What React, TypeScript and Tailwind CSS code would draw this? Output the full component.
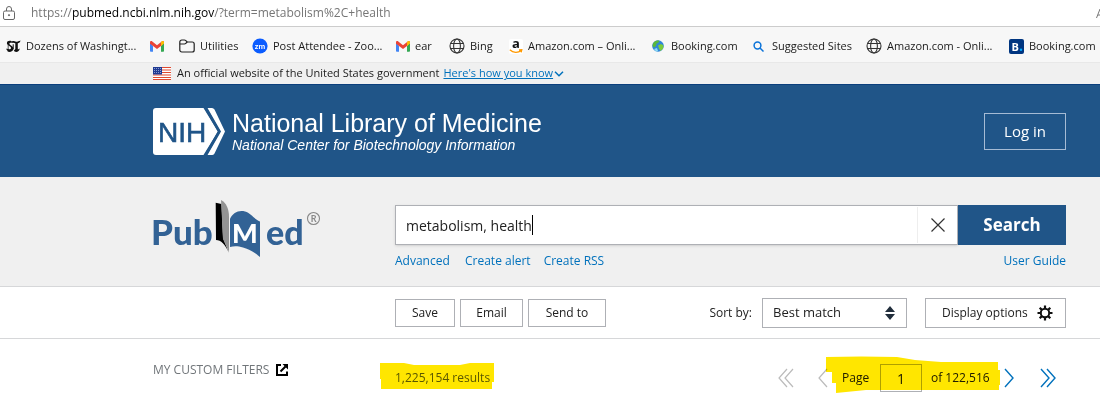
import React from 'react';

const GmailIcon = () => (
  <svg viewBox="0 0 14 11" className="h-[11px] w-[14px] shrink-0" aria-hidden="true">
    <path d="M0 1.6V10a.8.8 0 0 0 .8.8H3V5z" fill="#4285f4" />
    <path d="M14 1.6V10a.8.8 0 0 1-.8.8H11V5z" fill="#34a853" />
    <path d="M0 1.4C0 .2 1.3-.3 2.3.5L7 4.2 11.7.5C12.7-.3 14 .2 14 1.4L11 4.9 7 8 3 5 0 2.8z" fill="#ea4335" />
    <path d="M11 1 11.7.5C12.7-.3 14 .2 14 1.4v1.2l-3 2.4z" fill="#fbbc04" />
  </svg>
);

const GlobeIcon = () => (
  <svg viewBox="0 0 16 16" className="size-4 shrink-0" fill="none" stroke="#333" strokeWidth="1.1" aria-hidden="true">
    <circle cx="8" cy="8" r="7" />
    <ellipse cx="8" cy="8" rx="3.4" ry="7" />
    <path d="M1.5 5.5h13M1.5 10.5h13" />
  </svg>
);

const FolderIcon = () => (
  <svg viewBox="0 0 16 14" className="h-[14px] w-4 shrink-0" fill="none" stroke="#222" strokeWidth="1.2" aria-hidden="true">
    <path d="M.8 3A2 2 0 0 1 2.8 1h2.6c.6 0 1 .2 1.4.6L8.2 3h5a2 2 0 0 1 2 2v6a2 2 0 0 1-2 2H2.8a2 2 0 0 1-2-2z" />
    <path d="M.8 5h4.6c.6 0 1-.2 1.4-.6L8.2 3" />
  </svg>
);

const TimesIcon = () => (
  <svg viewBox="0 0 15 13" className="h-[13px] w-[15px] shrink-0" aria-hidden="true">
    <path d="M5.8 1.2C3.4.2.8 1 .9 3.3 1 5.4 5 6 5 8c0 1.3-2 1.7-4.5.5v1.3L3 12c2.6 0 4.4-1.3 4.4-3.5C7.4 6 3.4 5.3 3.4 3.5c0-1 1.2-1 2.4-.5z" fill="#111" />
    <path d="M6 1.5c1.5-1 2.6.3 4.2.3 1.4 0 2.6-.8 4.3-1.3-.4 1.8-1.3 2.7-2.7 2.7v6.3l2-1c-.4 2-1.7 3.5-3.7 3.5-1 0-1.6-.5-2.3-1.2L9.3 9V3.2C8.2 3 7.3 2.5 6 3zM6.7 4.2h1v5h-1z" fill="#111" />
    <path d="M2.2 1v11" stroke="#111" strokeWidth=".7" />
  </svg>
);

const ZoomIcon = () => (
  <svg viewBox="0 0 16 16" className="size-4 shrink-0" aria-hidden="true">
    <circle cx="8" cy="8" r="7.6" fill="#0b5cff" />
    <text x="8" y="10.5" textAnchor="middle" fontSize="8" fontWeight="700" fill="#fff" fontFamily="Lato, sans-serif">zm</text>
  </svg>
);

const AmazonIcon = () => (
  <svg viewBox="0 0 14 15" className="h-[15px] w-[14px] shrink-0 overflow-visible" aria-hidden="true">
    <rect width="14" height="15" rx="2" fill="#fff" />
    <text x="7" y="9" textAnchor="middle" fontSize="13" fontWeight="700" fill="#111" fontFamily="Open Sans, sans-serif">a</text>
    <path d="M.8 10.8c3.5 3.2 8.3 3.2 11.4.6M10 11l2.8-.3-.6 2.6" fill="none" stroke="#f90" strokeWidth="1.3" />
  </svg>
);

const EarthIcon = () => (
  <svg viewBox="0 0 12 12" className="mr-[2px] size-3 shrink-0" aria-hidden="true">
    <circle cx="6" cy="6" r="5.8" fill="#2f86d8" />
    <path d="M1 3.5C2.5 1 5 0 7.5 1L6 3 4.5 3.5 4 6 2 7.5.5 6z" fill="#59b83c" />
    <path d="M6 5.5 9 4l2.5 1.5L11 8.5 8.5 11 7 8.5z" fill="#7ccc3a" />
    <path d="M2 9l3-1 1 3-2 .5z" fill="#8edcf5" />
  </svg>
);

const SearchIcon = () => (
  <svg viewBox="0 0 11 11" className="mr-[3px] size-[11px] shrink-0" fill="none" stroke="#0b73d9" strokeWidth="1.5" aria-hidden="true">
    <circle cx="4.5" cy="4.5" r="3.4" />
    <path d="m7 7 3.5 3.5" />
  </svg>
);

const BookingIcon = () => (
  <svg viewBox="0 0 15 15" className="size-[15px] shrink-0" aria-hidden="true">
    <rect width="15" height="15" rx="2" fill="#003580" />
    <text x="2.5" y="11.5" fontSize="11" fontWeight="700" fill="#fff" fontFamily="Open Sans, sans-serif">B</text>
    <circle cx="12" cy="10.7" r="1.2" fill="#0af" />
  </svg>
);

const bookmarks = [
  { icon: <TimesIcon />, label: 'Dozens of Washingt...' },
  { icon: <GmailIcon />, label: '' },
  { icon: <FolderIcon />, label: 'Utilities' },
  { icon: <ZoomIcon />, label: 'Post Attendee - Zoo...' },
  { icon: <GmailIcon />, label: 'ear' },
  { icon: <GlobeIcon />, label: 'Bing' },
  { icon: <AmazonIcon />, label: 'Amazon.com – Onli...' },
  { icon: <EarthIcon />, label: 'Booking.com' },
  { icon: <SearchIcon />, label: 'Suggested Sites' },
  { icon: <GlobeIcon />, label: 'Amazon.com - Onli...' },
  { icon: <BookingIcon />, label: 'Booking.com' },
];

const BrowserBar: React.FC = () => (
  <div>
    <div className="flex h-[27px] items-center justify-between border-b border-[#ccc] bg-white pl-[3px] text-[12px] text-[#767676]">
      <div className="flex items-center gap-4">
        <svg viewBox="0 0 12 14" className="h-[14px] w-3" fill="none" stroke="#666" aria-hidden="true">
          <rect x=".5" y="5" width="11" height="8.5" rx="1.5" />
          <path d="M3.5 5V3a2.5 2.5 0 0 1 5 0v2" />
          <circle cx="6" cy="9.2" r=".6" fill="#666" />
        </svg>
        <span>https://<span className="text-black">pubmed.ncbi.nlm.nih.gov</span>/?term=metabolism%2C+health</span>
      </div>
      <svg viewBox="0 0 4 10" className="h-[10px] w-1" stroke="#777" fill="none" aria-hidden="true">
        <path d="M.5 10 4 1M2 7h2" />
      </svg>
    </div>
    <nav className="grid h-9 grid-cols-[144px_29px_73px_144px_53px_60px_143px_101px_113px_143px_auto] items-center border-b border-[#e8e8e8] bg-[#f7f7f7] pt-[3px] pl-[6px] text-[11px]">
      {bookmarks.map(({ icon, label }, i) => (
        <a key={i} href="#" aria-label={label || 'Gmail'} className="flex items-center gap-[5px] whitespace-nowrap text-[#1a1a1a]">
          {icon}
          {label}
        </a>
      ))}
    </nav>
  </div>
);

const FlagIcon = () => (
  <svg viewBox="0 0 18 13" className="h-[13px] w-[18px]" aria-hidden="true">
    <rect width="18" height="13" fill="#fff" />
    <path d="M0 .5h18M0 3h18M0 5.5h18M0 8h18M0 10.5h18M0 12.7h18" stroke="#e0492f" strokeWidth="1.2" />
    <rect width="9" height="7.5" fill="#1f3a93" />
    <path d="M1 1.5h7M1 3.5h7M1 5.5h7" stroke="#b9c4e8" strokeWidth=".7" strokeDasharray="1 1" />
  </svg>
);

const GovBanner: React.FC = () => (
  <div className="flex h-[21px] items-center bg-[#f0f0f0] pl-[153px] text-[11px] text-[#1b1b1b]">
    <FlagIcon />
    <span className="ml-[6px]">An official website of the United States government</span>
    <a href="#" className="ml-1 flex items-center text-[#0071bc] underline">
      Here's how you know
      <svg viewBox="0 0 10 6" className="ml-px h-[6px] w-[10px]" fill="none" stroke="#0071bc" strokeWidth="1.5" aria-hidden="true">
        <path d="m1 .8 4 4 4-4" />
      </svg>
    </a>
  </div>
);

const Header: React.FC = () => (
  <header className="flex h-[93px] items-center justify-between border-t border-[#0b3f7c] bg-[#205588] pr-[34px] pl-[153px] text-white">
    <a href="#" className="flex items-center gap-[7px]">
      <svg viewBox="0 0 72 47" className="h-[47px] w-[72px]" aria-hidden="true">
        <path d="M3 0h47.5L65 23.5 50.5 47H3a3 3 0 0 1-3-3V3a3 3 0 0 1 3-3z" fill="#fff" />
        <path d="M54.5 0H59q1.5 0 2.5 1.5L72 23.5 61.5 45.5Q60.5 47 59 47h-4.500L68 23.5z" fill="#fff" />
        <path d="M52 -1 66 23.5 52 48" fill="none" stroke="#205588" strokeWidth="2.4" />
        <text x="5" y="33.5" fontSize="28" fill="#205588" stroke="#205588" strokeWidth=".6" fontFamily="Liberation Sans, sans-serif">NIH</text>
      </svg>
      <span className="flex flex-col pt-px font-['Liberation_Sans',sans-serif]">
        <span className="text-[25px] leading-[26px]">National Library of Medicine</span>
        <span className="text-[14px] leading-[18px] italic">National Center for Biotechnology Information</span>
      </span>
    </a>
    <button className="h-[37px] w-[82px] border border-[#a6bbd4] text-[15px]">Log in</button>
  </header>
);

const PubMedLogo = () => (
  <svg viewBox="0 0 170 60" className="h-[60px] w-[170px] overflow-visible" role="img" aria-label="PubMed" fontFamily="Lato, sans-serif">
    <text x="-2" y="46" fontSize="35" fontWeight="900" fill="#326295">Pub</text>
    <path d="M62.7 3.7 68.5 5 70 39 76 54C72 45 68 41 63 41z" fill="#000" />
    <path d="M68 1c5.5 3 8 9 8 17v35l-6-13z" fill="#939393" />
    <path d="M77 20c3-6 8-9 15-7.5 6 1.5 9 7.5 15 10V58c-7-6-12-8-17-9.5-5-1.5-9-1.500-13-.5z" fill="#326295" />
    <text x="79" y="44" fontSize="27" fontWeight="900" fill="#fff">M</text>
    <text x="113" y="46" fontSize="34" fontWeight="900" fill="#326295">ed</text>
    <circle cx="160.5" cy="19.5" r="6" fill="none" stroke="#888" strokeWidth="1.1" />
    <text x="157.7" y="22.7" fontSize="9" fontWeight="700" fill="#888">R</text>
  </svg>
);

const SearchPanel: React.FC = () => (
  <section className="grid grid-cols-[242px_1fr] border-b border-[#d6d7d9] bg-[#f0f0f0] pt-[22px] pr-[34px] pb-[15px] pl-[153px]">
    <a href="#" className="h-[60px]">
      <PubMedLogo />
    </a>
    <div className="pt-[6px]">
      <form className="flex h-10" onSubmit={(e) => e.preventDefault()}>
        <div className="flex flex-1 items-center border border-[#aeb0b5] bg-white pl-[10px] shadow-sm">
          <input
            aria-label="Search term"
            defaultValue="metabolism, health"
            className="[field-sizing:content] bg-transparent text-[14px] text-[#212121] outline-none"
          />
          <span className="h-5 w-px bg-black" />
          <button type="button" aria-label="Clear search" className="ml-auto flex h-9 w-10 items-center justify-center border-l border-[#eee]">
            <svg viewBox="0 0 14 14" className="size-[14px]" stroke="#333" strokeWidth="1.2" aria-hidden="true">
              <path d="m.5.5 13 13M13.500.5l-13 13" />
            </svg>
          </button>
        </div>
        <button type="submit" className="w-[108px] bg-[#205588] text-[17px] font-bold text-white">Search</button>
      </form>
      <div className="mt-[6px] flex gap-[13px] text-[12px] leading-5 text-[#0071bc]">
        <a href="#" className="w-[57px]">Advanced</a>
        <a href="#">Create alert</a>
        <a href="#">Create RSS</a>
        <a href="#" className="ml-auto">User Guide</a>
      </div>
    </div>
  </section>
);

const GearIcon = () => (
  <svg viewBox="0 0 16 16" className="size-4" fill="none" stroke="#111" aria-hidden="true">
    <circle cx="8" cy="8" r="4.2" strokeWidth="2" />
    <path d="M8 .5V4M8 12v3.5M.5 8H4M12 8h3.5M2.7 2.7l2.4 2.4M10.9 10.9l2.4 2.4M2.7 13.3l2.4-2.4M10.9 5.1l2.4-2.4" strokeWidth="2.2" />
    <circle cx="8" cy="8" r="2.8" fill="#fff" stroke="none" />
  </svg>
);

const Toolbar: React.FC = () => (
  <section className="flex items-center border-b border-[#d6d7d9] pt-[11px] pr-[34px] pb-[10px] pl-[395px] text-[12px] text-[#212121]">
    <div className="flex gap-[5px]">
      <button className="h-7 w-[60px] border border-[#aeb0b5]">Save</button>
      <button className="h-7 w-[63px] border border-[#aeb0b5]">Email</button>
      <button className="h-7 w-[78px] border border-[#aeb0b5]">Send to</button>
    </div>
    <label htmlFor="sort" className="ml-auto">Sort by:</label>
    <div className="relative ml-[10px]">
      <select id="sort" className="block h-[30px] w-[145px] appearance-none border border-[#aeb0b5] pl-[10px] text-[13px]">
        <option>Best match</option>
      </select>
      <svg viewBox="0 0 10 14" className="pointer-events-none absolute top-2 right-3 h-[14px] w-[10px]" fill="#212e3c" aria-hidden="true">
        <path d="M5 0 10 6H0zM5 14 0 8h10z" />
      </svg>
    </div>
    <button className="ml-[18px] flex h-[30px] w-[141px] items-center justify-between border border-[#aeb0b5] pr-3 pl-4">
      Display options
      <GearIcon />
    </button>
  </section>
);

const Results: React.FC = () => (
  <section className="grid grid-cols-[242px_1fr_auto] pt-[15px] pr-11 pl-[153px] text-[12px]">
    <a href="#" className="flex h-8 items-center gap-[7px] text-[#71767a]">
      MY CUSTOM FILTERS
      <svg viewBox="0 0 12 12" className="size-3" fill="none" stroke="#000" strokeWidth="2" aria-hidden="true">
        <path d="M5 1H1v10h10V7.5M4.5 7.5l5-5" />
        <path d="M6.5 0H12v5.5z" fill="#000" stroke="none" />
      </svg>
    </a>
    <div className="relative flex h-12 items-center">
      <span className="text-[#5b616b]">1,225,154 results</span>
      <svg viewBox="0 0 114 26" className="pointer-events-none absolute top-[9px] left-[-15px] h-[26px] w-[114px] mix-blend-multiply" fill="#ffe600" aria-hidden="true">
        <path d="M0 0h24l10 2h46l10-2h24v19h-2v7H1V16H0z" />
      </svg>
    </div>
    <div className="relative flex h-12 items-center text-[#212121]">
      <button aria-label="First page" className="w-[40px]">
        <svg viewBox="0 0 16 20" className="h-5 w-4" fill="none" stroke="#bbb" strokeWidth="1.2" aria-hidden="true">
          <path d="M9 1 1 10l8 9M15 1 7 10l8 9" />
        </svg>
      </button>
      <button aria-label="Previous page" className="w-6">
        <svg viewBox="0 0 10 20" className="h-5 w-[10px]" fill="none" stroke="#bbb" strokeWidth="1.2" aria-hidden="true">
          <path d="M9 1 1 10l8 9" />
        </svg>
      </button>
      <label htmlFor="page" className="w-[38px]">Page</label>
      <input id="page" defaultValue="1" className="h-7 w-[42px] border border-[#aeb0b5] text-center text-[14px]" />
      <span className="w-[82px] pl-[9px]">of 122,516</span>
      <button aria-label="Next page" className="w-9">
        <svg viewBox="0 0 10 20" className="h-5 w-[10px]" fill="none" stroke="#0071bc" strokeWidth="1.4" aria-hidden="true">
          <path d="m1 1 8 9-8 9" />
        </svg>
      </button>
      <button aria-label="Last page">
        <svg viewBox="0 0 16 20" className="h-5 w-4" fill="none" stroke="#0071bc" strokeWidth="1.4" aria-hidden="true">
          <path d="m1 1 8 9-8 9M7 1l8 9-8 9" />
        </svg>
      </button>
      <svg viewBox="0 0 174 38" className="pointer-events-none absolute top-[2px] left-12 h-[38px] w-[174px] mix-blend-multiply" fill="#ffe600" aria-hidden="true">
        <path d="M0 1q35-1 71 0l18 3 26 2h57v8h2v15h-1v5H40L10 37V27H6V16H0z" />
      </svg>
    </div>
  </section>
);

export default function App() {
  return (
    <div className="bg-white font-['Open_Sans','Noto_Sans',sans-serif] text-[#212121]">
      <BrowserBar />
      <GovBanner />
      <Header />
      <SearchPanel />
      <Toolbar />
      <Results />
    </div>
  );
}
